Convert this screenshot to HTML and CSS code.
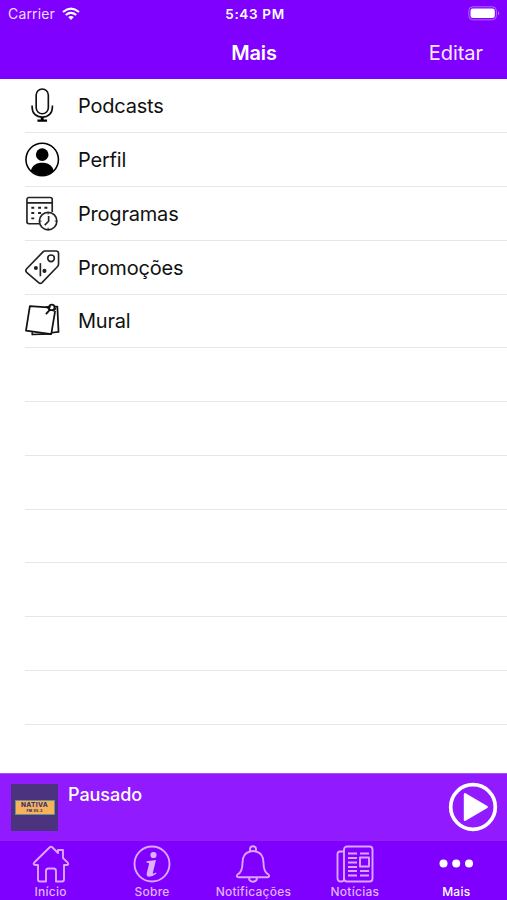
FILE: index.html
```html
<!DOCTYPE html>
<html lang="pt-BR">
<head>
<meta charset="utf-8">
<title>Mais</title>
<link rel="stylesheet" href="styles.css">
</head>
<body>
<div class="app">
  <header class="header">
    <div class="status">
      <div class="carrier"><span class="carrier-name">Carrier</span>
        <svg class="wifi" width="18" height="14" viewBox="0 0 18 14"><g fill="none" stroke="#fff" stroke-width="2.1"><path d="M1 5Q9-1.8 17 5"/><path d="M3.8 8Q9 3.700 14.200 8"/></g><path d="M6.200 10Q9 7.900 11.800 10L9 13Z" fill="#fff"/></svg>
      </div>
      <span class="time">5:43 PM</span>
      <svg class="battery" width="32" height="15" viewBox="0 0 32 15"><rect x=".8" y=".8" width="27.600" height="13" rx="4" fill="none" stroke="#b566ff" stroke-width="1"/><rect x="2.500" y="2.600" width="24.300" height="9.500" rx="2.300" fill="#fff"/><path d="M30 5Q32.400 7.300 30 9.600Z" fill="#b566ff"/></svg>
    </div>
    <div class="nav"><h1 class="title">Mais</h1><span class="edit">Editar</span></div>
  </header>
  <main class="list">
    <div class="row">
      <svg class="icon" viewBox="0 0 36 36"><g fill="none" stroke="#111" stroke-width="1.700"><rect x="11.500" y="1" width="12.500" height="25.500" rx="6.250"/><path d="M7.300 18v1.500C7.300 26 11.500 30 17.700 30s10.500-4 10.500-10.500V18"/></g><path d="M16.200 30h3v2.500h3.500v2.200H12.800v-2.200h3.400z"/></svg>
      <span class="label">Podcasts</span>
    </div>
    <div class="row">
      <svg class="icon" viewBox="0 0 36 36"><circle cx="17.700" cy="18" r="16.700" fill="none" stroke="#000" stroke-width="1.600"/><circle cx="17.700" cy="13" r="6.500"/><path d="M6 29.500C7.500 24 11.700 21.300 17.700 21.300S28 24 29.500 29.500A16.500 16.500 0 0 1 6 29.500Z"/></svg>
      <span class="label">Perfil</span>
    </div>
    <div class="row">
      <svg class="icon" viewBox="0 0 36 36"><g fill="none" stroke="#222" stroke-width="1.700"><path d="M14.500 28.500H4a2 2 0 0 1-2-2V3.500a2 2 0 0 1 2-2H26a2 2 0 0 1 2 2V16.500M2 7H28"/><circle cx="23.800" cy="25.800" r="9"/><path d="M24.300 20.500v5.500l-4 4"/><path d="M23.800 17v2M23.800 32.500v2M15 25.800h2M30.500 25.800h2" stroke-width="1"/></g><path d="M6.500 12h3M13.500 12h3M20 12h3M6.500 17.500h3M13.500 17.500h3M6.500 23h3" stroke="#222" stroke-width="2"/></svg>
      <span class="label">Programas</span>
    </div>
    <div class="row">
      <svg class="icon" viewBox="0 0 36 36"><g fill="none" stroke="#222" stroke-width="1.700"><path d="M20.500 1H32a2.500 2.500 0 0 1 2.500 2.500V14.500Q34.500 16 33.500 17L17.500 33.500Q15.700 35.200 14 33.500L1.700 23Q0 21.200 1.700 19.300L18.500 2Q19.300 1 20.500 1Z"/><circle cx="26.800" cy="8.500" r="3.400"/><path d="M15.800 13.500v13.500"/></g><circle cx="11.200" cy="18.500" r="2.100" fill="#222"/><circle cx="20" cy="21.500" r="2.100" fill="#222"/></svg>
      <span class="label">Promoções</span>
    </div>
    <div class="row">
      <svg class="icon" viewBox="0 0 36 36"><g fill="none" stroke="#111" stroke-width="1.800" stroke-linejoin="round"><path d="M23.500 4.500L5 3.200 1 28.500 27 32 31 8"/><path d="M30.500 3.800h2.800l1.200 26-7.200.8M7.500 30v2.400l19-.7"/></g><path d="M21 3.300h6l-2.500 4z"/><circle cx="27.500" cy="4.500" r="2.900" fill="none" stroke="#111" stroke-width="1.900"/><path d="M25.500 7l-4 4.500" stroke="#111" stroke-width="1.900"/><path d="M28.500 8.500l3.500-3" stroke="#111" stroke-width="1.500"/></svg>
      <span class="label">Mural</span>
    </div>
    <div class="row"></div><div class="row"></div><div class="row"></div><div class="row"></div><div class="row"></div><div class="row"></div><div class="row"></div>
  </main>
  <section class="player">
    <div class="cover"><div class="brand"><span class="brand-name">NATIVA</span><span class="brand-sub">FM 95.3</span></div></div>
    <span class="state">Pausado</span>
    <svg class="play" width="50" height="50" viewBox="0 0 50 50"><circle cx="25" cy="25" r="22.300" fill="none" stroke="#fff" stroke-width="3.700"/><path d="M17 12.200L38.700 25 17 37.800Z" fill="#fff" stroke="#fff" stroke-width="2.400" stroke-linejoin="round"/></svg>
  </section>
  <nav class="tabs">
    <div class="tab"><svg class="tab-icon" viewBox="0 0 38 38"><path d="M6 20H3.200Q.5 19.500 2.500 17.300L17.500 2.500Q19 1 20.500 2.500L26 8V5h5v8l4.700 4.700Q37 19.500 35 20H32V34.500Q32 36.500 30 36.500H24V26Q24 23.500 21.500 23.500H16.500Q14 23.500 14 26V36.500H8Q6 36.500 6 34.500Z"/></svg><span>Início</span></div>
    <div class="tab"><svg class="tab-icon" viewBox="0 0 38 38"><circle cx="19" cy="19" r="17.500"/><g class="solid"><circle cx="20.500" cy="10" r="3.100"/><path d="M13.500 16.200L23 15 19.800 28Q19.500 29.500 23 27.500L23.500 28.500Q19.500 31.800 16 31.800 13 31.500 13.800 28L16 19Q16.300 17.500 13.500 17.500Z"/></g></svg><span>Sobre</span></div>
    <div class="tab"><svg class="tab-icon" viewBox="0 0 38 38"><path d="M16 6.500V4Q16 1.300 19 1.300T22 4V6.500M16 6.500Q8.500 8 8.500 18 8.500 27 3.500 29.500 1.800 32 4.500 32.200H33.500Q36.200 32 34.500 29.500 29.500 27 29.500 18 29.500 8 22 6.500 19 5.500 16 6.500ZM15 32.500Q15 36.700 19 36.700T23 32.500"/></svg><span>Notificações</span></div>
    <div class="tab"><svg class="tab-icon" viewBox="0 0 38 38"><rect x="8" y="1.500" width="28.500" height="35" rx="3"/><path d="M8 6.500H4Q1.500 6.500 1.500 9V33Q1.500 36.500 5 36.500T8 33M12 8.500H21M24 8.500H33M12 13H21M12 17.500H21M12 22H21M12 26H21M24 26H33M12 30.500H21M24 30.500H33"/><rect x="24" y="12.500" width="9" height="9"/></svg><span>Notícias</span></div>
    <div class="tab active"><svg class="tab-icon" viewBox="0 0 38 38"><circle cx="6.500" cy="18.500" r="4"/><circle cx="19.200" cy="18.500" r="4"/><circle cx="32" cy="18.500" r="4"/></svg><span>Mais</span></div>
  </nav>
</div>
</body>
</html>
```
FILE: styles.css
```css
* { box-sizing: border-box; }
body { margin: 0; font-family: Inter, "Liberation Sans", sans-serif; background: #fff; }
svg { display: block; flex: none; }
.app { width: 507px; height: 900px; display: flex; flex-direction: column; overflow: hidden; }
.header { height: 79px; flex: none; background: #8000ff; color: #fff; }
.status { height: 27px; padding: 0 7px 0 8px; display: grid; grid-template-columns: 1fr auto 1fr; align-items: center; }
.carrier { display: flex; align-items: center; gap: 7px; font-size: 14px; color: #f0dcff; }
.carrier-name { letter-spacing: .15px; }
.time { font-size: 13.500px; font-weight: 600; letter-spacing: .65px; padding-left: 2px; }
.battery { justify-self: end; }
.nav { height: 51px; padding: 0 24px; display: grid; grid-template-columns: 1fr auto 1fr; align-items: center; }
.title { margin: 0; grid-column: 2; font-size: 20px; font-weight: 600; letter-spacing: -.2px; padding-left: 1px; }
.edit { justify-self: end; font-size: 20px; letter-spacing: -.05px; color: #f7eaff; }
.list { height: 694px; flex: none; padding-top: .6px; }
.row { height: 53.750px; margin-left: 25px; display: flex; align-items: center; gap: 18px; border-bottom: 1px solid #e6e6e6; }
.icon { width: 35px; height: 35px; }
.label { font-size: 20px; letter-spacing: -.2px; color: #111; padding-top: 1px; }
.player { height: 67px; flex: none; display: flex; padding: 10px 9px 0 11px; background: #921aff; border-top: 1px solid #a64dff; color: #fff; }
.cover { width: 47px; height: 47px; background: #4b3380; display: flex; align-items: center; justify-content: center; }
.brand { width: 40px; height: 15px; border: 1px solid #6f8f88; background: #f5b45c; color: #44306d; display: flex; flex-direction: column; align-items: center; justify-content: center; font-weight: 800; }
.brand-name { font-size: 6.500px; line-height: 8px; letter-spacing: .3px; }
.brand-sub { font-size: 3.500px; line-height: 5px; letter-spacing: .3px; }
.state { margin: 0 0 0 10px; font-size: 18px; line-height: 22px; font-weight: 500; letter-spacing: -.05px; }
.play { margin: -2px 0 0 auto; }
.tabs { height: 60px; flex: none; display: grid; grid-template-columns: repeat(5, 1fr); background: #8000ff; border-top: 1px solid #9020f5; color: #dfb3ff; }
.tab { display: flex; flex-direction: column; align-items: center; padding-top: 4px; font-size: 12px; line-height: 16px; font-weight: 500; letter-spacing: .25px; }
.tab-icon { width: 38px; height: 38px; fill: none; stroke: #dba6ff; stroke-width: 1.900; stroke-linejoin: round; margin-bottom: 1px; }
.solid { fill: #dfb0ff; stroke: none; }
.active { color: #fff; }
.active .tab-icon { fill: #fff; stroke: none; }
```
